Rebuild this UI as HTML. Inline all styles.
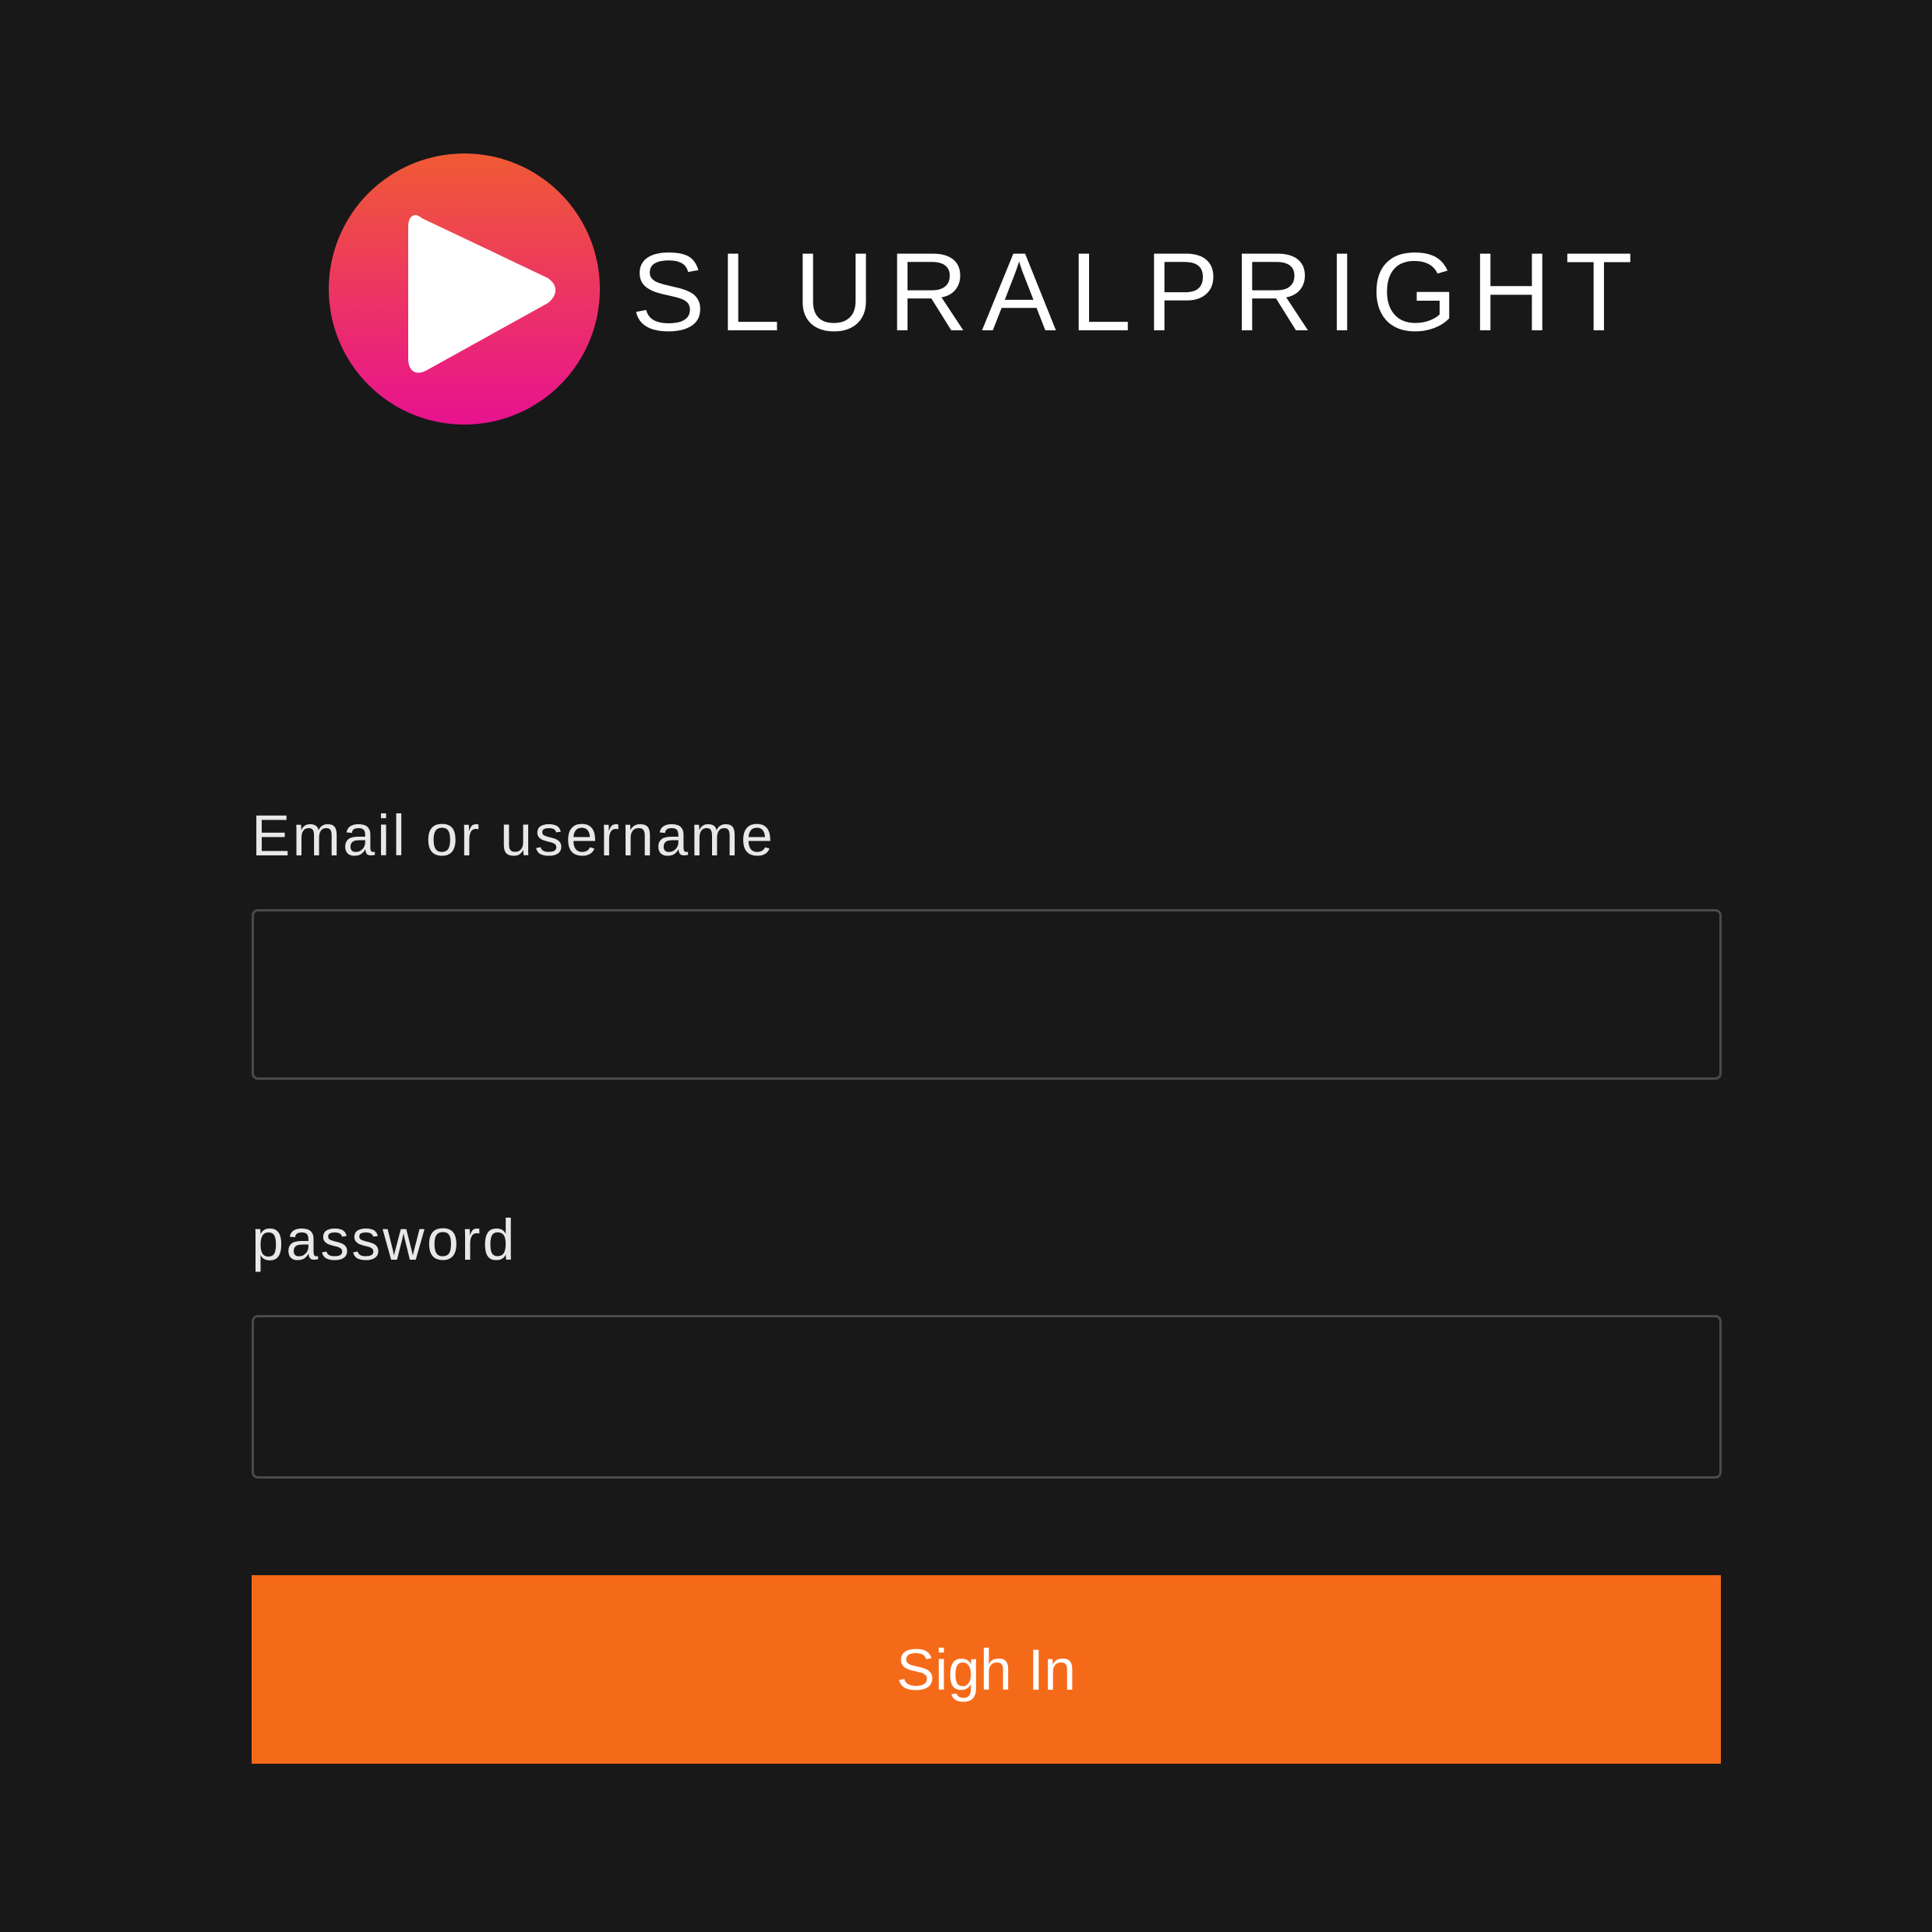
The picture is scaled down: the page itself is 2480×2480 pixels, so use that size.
<!DOCTYPE html>
<html><head><meta charset="utf-8">
<style>
html,body{margin:0;padding:0;background:#181818;width:2480px;height:2480px;overflow:hidden;font-family:"Liberation Sans",sans-serif;}
.lbl{position:absolute;left:323px;color:#e8e8e8;font-size:74px;letter-spacing:3px;}
.inp{position:absolute;left:323px;width:1881px;border:3px solid #4a4a4a;border-radius:8px;background:#181818;}
.btn{position:absolute;left:323px;top:2022px;width:1886px;height:242px;background:#f56a19;color:#fff;font-size:74px;display:flex;align-items:center;justify-content:center;font-weight:500;}
</style></head><body>
<svg style="position:absolute;left:0;top:0" width="2480" height="700">
<defs><linearGradient id="g" x1="0" y1="0" x2="0" y2="1"><stop offset="0" stop-color="#f05a34"/><stop offset="1" stop-color="#e8128f"/></linearGradient></defs>
<circle cx="596" cy="371" r="174" fill="url(#g)"/>
<path d="M538 285 Q530 277 530 292 L530 460 Q530 478 545 470 L700 384 Q714 372 700 362 Z" fill="#fff" stroke="#fff" stroke-width="12" stroke-linejoin="round"/>
<text x="810" y="424" font-family="Liberation Sans, sans-serif" font-size="143" fill="#fff" textLength="1286" lengthAdjust="spacing">SLURALPRIGHT</text>
</svg>
<div class="lbl" style="top:1030px">Email or username</div>
<div class="inp" style="top:1167px;height:213px"></div>
<div class="lbl" style="top:1549px">password</div>
<div class="inp" style="top:1688px;height:204px"></div>
<div class="btn">Sigh In</div>
</body></html>
